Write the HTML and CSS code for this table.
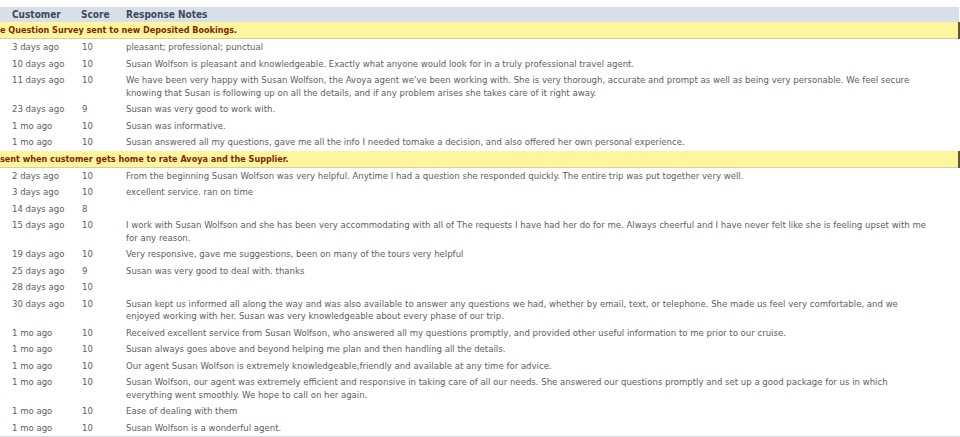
FILE: index.html
```html
<!DOCTYPE html>
<html lang="en">
<head>
  <meta charset="UTF-8">
  <title>Survey Responses</title>
  <link rel="stylesheet" href="styles.css">
</head>
<body>
  <table class="responses">
    <colgroup>
      <col class="col-when">
      <col class="col-score">
      <col class="col-notes">
    </colgroup>
    <thead>
      <tr>
        <th>Customer</th>
        <th>Score</th>
        <th>Response Notes</th>
      </tr>
    </thead>
    <tbody>
      <tr class="survey">
        <td colspan="3">e Question Survey sent to new Deposited Bookings.</td>
      </tr>
      <tr><td>3 days ago</td><td>10</td><td>pleasant; professional; punctual</td></tr>
      <tr><td>10 days ago</td><td>10</td><td>Susan Wolfson is pleasant and knowledgeable. Exactly what anyone would look for in a truly professional travel agent.</td></tr>
      <tr><td>11 days ago</td><td>10</td><td>We have been very happy with Susan Wolfson, the Avoya agent we've been working with. She is very thorough, accurate and prompt as well as being very personable. We feel secure<br>knowing that Susan is following up on all the details, and if any problem arises she takes care of it right away.</td></tr>
      <tr><td>23 days ago</td><td>9</td><td>Susan was very good to work with.</td></tr>
      <tr><td>1 mo ago</td><td>10</td><td>Susan was informative.</td></tr>
      <tr><td>1 mo ago</td><td>10</td><td>Susan answered all my questions, gave me all the info I needed tomake a decision, and also offered her own personal experience.</td></tr>

      <tr class="survey">
        <td colspan="3">sent when customer gets home to rate Avoya and the Supplier.</td>
      </tr>
      <tr><td>2 days ago</td><td>10</td><td>From the beginning Susan Wolfson was very helpful. Anytime I had a question she responded quickly. The entire trip was put together very well.</td></tr>
      <tr><td>3 days ago</td><td>10</td><td>excellent service. ran on time</td></tr>
      <tr><td>14 days ago</td><td>8</td><td></td></tr>
      <tr><td>15 days ago</td><td>10</td><td>I work with Susan Wolfson and she has been very accommodating with all of The requests I have had her do for me. Always cheerful and I have never felt like she is feeling upset with me<br>for any reason.</td></tr>
      <tr><td>19 days ago</td><td>10</td><td>Very responsive, gave me suggestions, been on many of the tours very helpful</td></tr>
      <tr><td>25 days ago</td><td>9</td><td>Susan was very good to deal with. thanks</td></tr>
      <tr><td>28 days ago</td><td>10</td><td></td></tr>
      <tr><td>30 days ago</td><td>10</td><td>Susan kept us informed all along the way and was also available to answer any questions we had, whether by email, text, or telephone. She made us feel very comfortable, and we<br>enjoyed working with her. Susan was very knowledgeable about every phase of our trip.</td></tr>
      <tr><td>1 mo ago</td><td>10</td><td>Received excellent service from Susan Wolfson, who answered all my questions promptly, and provided other useful information to me prior to our cruise.</td></tr>
      <tr><td>1 mo ago</td><td>10</td><td>Susan always goes above and beyond helping me plan and then handling all the details.</td></tr>
      <tr><td>1 mo ago</td><td>10</td><td>Our agent Susan Wolfson is extremely knowledgeable,friendly and available at any time for advice.</td></tr>
      <tr><td>1 mo ago</td><td>10</td><td>Susan Wolfson, our agent was extremely efficient and responsive in taking care of all our needs. She answered our questions promptly and set up a good package for us in which<br>everything went smoothly. We hope to call on her again.</td></tr>
      <tr><td>1 mo ago</td><td>10</td><td>Ease of dealing with them</td></tr>
      <tr><td>1 mo ago</td><td>10</td><td>Susan Wolfson is a wonderful agent.</td></tr>
    </tbody>
  </table>
  <div class="footer-line"></div>
</body>
</html>
```

FILE: styles.css
```css
body {
  margin: 0;
  padding-top: 7px;
  font-family: "DejaVu Sans Condensed", "DejaVu Sans", sans-serif;
  font-size: 9.5px;
  color: #5e5e5e;
  background: #ffffff;
}

.responses {
  width: 960px;
  border-collapse: collapse;
  table-layout: fixed;
}

.col-when {
  width: 70px;
}

.col-score {
  width: 44px;
}

.responses th {
  background-color: #d7e0e8;
  color: #3d4a58;
  font-weight: bold;
  font-size: 10px;
  text-align: left;
  height: 15px;
  padding: 0 0 0 12px;
  line-height: 15px;
}

.responses th:nth-child(2) {
  padding-left: 11px;
}

.responses td {
  padding: 2px 0 2px 12px;
  line-height: 12.5px;
  vertical-align: top;
  white-space: nowrap;
}

.survey td {
  background-color: #fff59e;
  color: #7a2a06;
  font-weight: bold;
  font-size: 9px;
  padding: 2px 0 1px 0;
  line-height: 13px;
  border-bottom: 1px solid #d6d2a0;
  border-right: 2px solid #5a5a3a;
}

.footer-line {
  height: 3px;
  background-color: #d3e0e3;
}
```
